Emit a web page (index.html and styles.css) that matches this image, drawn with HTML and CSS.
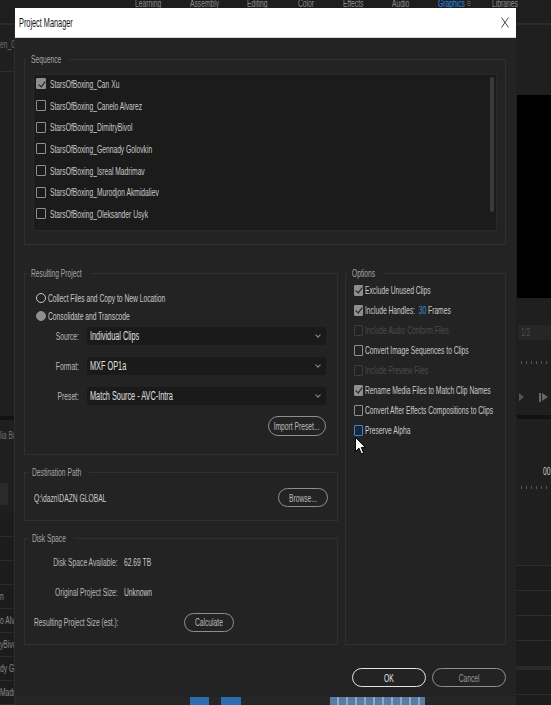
FILE: index.html
```html
<!DOCTYPE html>
<html lang="en">
<head>
    <meta charset="UTF-8">
    <meta name="viewport" content="width=device-width, initial-scale=1.0">
    <title>Project Manager</title>
    <link rel="stylesheet" href="styles.css">
</head>
<body>
    <!-- the editor behind the dialog -->
    <div class="app">
        <header class="workspaces">
            <span class="txt">Learning</span>
            <span class="txt">Assembly</span>
            <span class="txt">Editing</span>
            <span class="txt">Color</span>
            <span class="txt">Effects</span>
            <span class="txt">Audio</span>
            <span class="txt active">Graphics <span class="ws-menu">&#8801;</span></span>
            <span class="txt">Libraries</span>
        </header>

        <div class="panels">
            <aside class="project-panel">
                <div class="panel-head"><span class="txt">en_01</span></div>
                <div class="panel-fill"></div>
                <div class="panel-tab"><span class="txt">lia Browser</span></div>
                <div class="search-box"></div>
                <ul class="bin-rows">
                    <li></li>
                    <li></li>
                    <li></li>
                    <li><span class="txt">n</span></li>
                    <li><span class="txt">o Alvarez</span></li>
                    <li><span class="txt">yBivol</span></li>
                    <li><span class="txt">dy Golovkin</span></li>
                    <li><span class="txt">Madrimav</span></li>
                </ul>
            </aside>

            <main class="editor">
                <div class="clip-row">
                    <span class="clip clip-a"></span>
                    <span class="clip clip-b"></span>
                    <span class="clip clip-c"></span>
                </div>
            </main>

            <aside class="monitor-panel">
                <div class="monitor-video"></div>
                <div class="zoom-box"><span class="txt">1/2</span></div>
                <div class="ruler"></div>
                <div class="transport">
                    <span class="play"></span>
                    <span class="step"></span>
                </div>
                <div class="scrub"></div>
                <div class="timecode"><span class="txt">00:00:00</span></div>
                <div class="ruler"></div>
                <ul class="tracks">
                    <li></li>
                    <li></li>
                    <li></li>
                    <li class="split"></li>
                    <li></li>
                    <li></li>
                </ul>
            </aside>
        </div>
    </div>

    <!-- Project Manager dialog -->
    <div class="dialog">
        <div class="dialog-title">
            <span class="txt">Project Manager</span>
            <svg class="close" width="8" height="11" viewBox="0 0 8 11">
                <path d="M0.5 0.5 L7.5 10.5 M7.5 0.5 L0.5 10.5" stroke="#333" stroke-width="0.9" fill="none"/>
            </svg>
        </div>

        <div class="dialog-body">
            <fieldset class="group sequence">
                <legend><span class="txt">Sequence</span></legend>
                <div class="seq-list">
                    <ul class="seq-items">
                        <li><span class="check on"></span><span class="txt">StarsOfBoxing_Can Xu</span></li>
                        <li><span class="check"></span><span class="txt">StarsOfBoxing_Canelo Alvarez</span></li>
                        <li><span class="check"></span><span class="txt">StarsOfBoxing_DimitryBivol</span></li>
                        <li><span class="check"></span><span class="txt">StarsOfBoxing_Gennady Golovkin</span></li>
                        <li><span class="check"></span><span class="txt">StarsOfBoxing_Isreal Madrimav</span></li>
                        <li><span class="check"></span><span class="txt">StarsOfBoxing_Murodjon Akmidaliev</span></li>
                        <li><span class="check"></span><span class="txt">StarsOfBoxing_Oleksander Usyk</span></li>
                    </ul>
                    <div class="scrollbar"><div class="thumb"></div></div>
                </div>
            </fieldset>

            <div class="dialog-columns">
                <div class="left-col">
                    <fieldset class="group resulting">
                        <legend><span class="txt">Resulting Project</span></legend>
                        <div class="radio-row"><span class="radio"></span><span class="txt">Collect Files and Copy to New Location</span></div>
                        <div class="radio-row"><span class="radio on"></span><span class="txt">Consolidate and Transcode</span></div>
                        <div class="format-grid">
                            <span class="field-label"><span class="txt">Source:</span></span>
                            <div class="select"><span class="txt">Individual Clips</span><span class="chev"></span></div>
                            <span class="field-label"><span class="txt">Format:</span></span>
                            <div class="select"><span class="txt">MXF OP1a</span><span class="chev"></span></div>
                            <span class="field-label"><span class="txt">Preset:</span></span>
                            <div class="select"><span class="txt">Match Source - AVC-Intra</span><span class="chev"></span></div>
                        </div>
                        <div class="row-end">
                            <button class="pill import"><span class="txt">Import Preset...</span></button>
                        </div>
                    </fieldset>

                    <fieldset class="group destination">
                        <legend><span class="txt">Destination Path</span></legend>
                        <div class="path-row">
                            <span class="txt">Q:\dazn\DAZN GLOBAL</span>
                            <button class="pill browse"><span class="txt">Browse...</span></button>
                        </div>
                    </fieldset>

                    <fieldset class="group disk">
                        <legend><span class="txt">Disk Space</span></legend>
                        <div class="disk-grid">
                            <span class="field-label"><span class="txt">Disk Space Available:</span></span>
                            <span class="txt">62.69 TB</span>
                            <span class="field-label"><span class="txt">Original Project Size:</span></span>
                            <span class="txt">Unknown</span>
                        </div>
                        <div class="calc-row">
                            <span class="calc-label"><span class="txt">Resulting Project Size (est.):</span></span>
                            <button class="pill calc"><span class="txt">Calculate</span></button>
                        </div>
                    </fieldset>
                </div>

                <fieldset class="group options">
                    <legend><span class="txt">Options</span></legend>
                    <div class="opt"><span class="check on"></span><span class="txt">Exclude Unused Clips</span></div>
                    <div class="opt"><span class="check on"></span><span class="txt">Include Handles:&nbsp; <span class="num">30</span> Frames</span></div>
                    <div class="opt off"><span class="check"></span><span class="txt">Include Audio Conform Files</span></div>
                    <div class="opt"><span class="check"></span><span class="txt">Convert Image Sequences to Clips</span></div>
                    <div class="opt off"><span class="check"></span><span class="txt">Include Preview Files</span></div>
                    <div class="opt"><span class="check on"></span><span class="txt">Rename Media Files to Match Clip Names</span></div>
                    <div class="opt"><span class="check"></span><span class="txt">Convert After Effects Compositions to Clips</span></div>
                    <div class="opt"><span class="check focus"></span><span class="txt">Preserve Alpha</span></div>
                </fieldset>
            </div>

            <div class="dialog-buttons">
                <button class="pill primary"><span class="txt">OK</span></button>
                <button class="pill"><span class="txt">Cancel</span></button>
            </div>
        </div>

        <svg class="cursor" width="11" height="18" viewBox="0 0 11 18">
            <path d="M0.5 0.5 L0.5 14.5 L4 11.2 L6.4 17 L8.6 16 L6.3 10.4 L10.5 10.4 Z" fill="#fff" stroke="#000" stroke-width="1"/>
        </svg>
    </div>
</body>
</html>
```

FILE: styles.css
```css
* {
    box-sizing: border-box;
}

body {
    margin: 0;
    background-color: #1b1b1b;
    font-family: "Liberation Sans", Arial, sans-serif;
    font-size: 11px;
    color: #cacaca;
}

ul {
    list-style: none;
    margin: 0;
    padding: 0;
}

.txt {
    display: inline-block;
    transform: scaleX(0.61);
    transform-origin: 0 50%;
    white-space: nowrap;
}

/* ---- editor in the background ---- */

.app {
    width: 551px;
    height: 705px;
    display: flex;
    flex-direction: column;
    overflow: hidden;
}

.workspaces {
    height: 25px;
    flex: none;
    display: grid;
    grid-template-columns: 55px 57px 51px 45px 49px 46px 54px auto;
    align-items: start;
    padding-left: 135px;
    background-color: #1e1e1e;
    border-bottom: 2px solid #2b2b2b;
    line-height: 6px;
    color: #8d8d8d;
}

.workspaces .active {
    color: #2d8ceb;
}

.ws-menu {
    color: #6a6a6a;
}

.panels {
    flex: 1;
    display: flex;
    min-height: 0;
}

.project-panel {
    width: 15px;
    flex: none;
    display: flex;
    flex-direction: column;
    background-color: #1f1f1f;
    border-right: 1px solid #2c2c2c;
    overflow: hidden;
    color: #8a8a8a;
}

.panel-head {
    height: 47px;
    flex: none;
    padding-top: 13px;
    border-bottom: 1px solid #2d2d2d;
    color: #707070;
}

.panel-fill {
    flex: 1;
    border-bottom: 4px solid #121212;
}

.panel-tab {
    height: 30px;
    flex: none;
    line-height: 30px;
    color: #777;
}

.search-box {
    height: 22px;
    flex: none;
    width: 8px;
    margin: 33px 0 8px;
    background-color: #2a2a2a;
}

.bin-rows li {
    height: 24px;
    line-height: 23px;
    border-bottom: 1px solid #2a2a2a;
    background-color: #1c1c1c;
}

.editor {
    flex: 1;
    display: flex;
    flex-direction: column;
    justify-content: flex-end;
    background-color: #1d1d1d;
}

.clip-row {
    height: 8px;
    display: flex;
    padding-left: 175px;
    background-color: #262626;
}

.clip-a {
    width: 19px;
    background-color: #2b6db0;
}

.clip-b {
    width: 20px;
    margin-left: 12px;
    background-color: #2b6db0;
}

.clip-c {
    width: 95px;
    margin-left: 89px;
    background: repeating-linear-gradient(90deg, #5c7ba3 0 7px, #8fa9c9 7px 9px);
}

.monitor-panel {
    width: 35px;
    flex: none;
    display: flex;
    flex-direction: column;
    background-color: #1f1f1f;
    overflow: hidden;
}

.monitor-video {
    height: 203px;
    flex: none;
    margin: 70px 0 27px 1px;
    background-color: #000;
}

.zoom-box {
    height: 15px;
    flex: none;
    margin: 0 0 21px 2px;
    padding-left: 3px;
    line-height: 15px;
    background-color: #262626;
    color: #505050;
}

.ruler {
    height: 3px;
    flex: none;
    margin-left: 5px;
    background: repeating-linear-gradient(90deg, #565656 0 1px, transparent 1px 5px);
}

.transport {
    height: 14px;
    flex: none;
    display: flex;
    align-items: center;
    gap: 15px;
    margin: 26px 0 11px 3px;
}

.play {
    width: 0;
    height: 0;
    border-left: 5px solid #555;
    border-top: 4px solid transparent;
    border-bottom: 4px solid transparent;
}

.step {
    width: 9px;
    height: 9px;
    border-left: 2px solid #666;
    position: relative;
}

.step::after {
    content: "";
    position: absolute;
    left: 1px;
    top: 0;
    border-left: 6px solid #666;
    border-top: 4.5px solid transparent;
    border-bottom: 4.5px solid transparent;
}

.scrub {
    height: 4px;
    flex: none;
    margin-left: 1px;
    background-color: #121212;
}

.timecode {
    height: 14px;
    flex: none;
    margin: 45px 0 8px 27px;
    line-height: 14px;
    color: #cfcfcf;
}

.tracks {
    flex: 1;
    margin-top: 76px;
    border-top: 1px solid #2d2d2d;
}

.tracks li {
    height: 25px;
    border-bottom: 1px solid #2d2d2d;
    background-color: #1c1c1c;
}

.tracks li.split {
    height: 29px;
    border-bottom: 4px solid #2a2a2a;
}

/* ---- dialog ---- */

.dialog {
    position: absolute;
    left: 15px;
    top: 8px;
    width: 501px;
    height: 689px;
    display: flex;
    flex-direction: column;
    background-color: #232323;
}

.dialog-title {
    height: 30px;
    flex: none;
    display: flex;
    align-items: center;
    justify-content: space-between;
    padding: 0 7px 0 4px;
    background-color: #fff;
    border-bottom: 1px solid #d4d4d4;
    color: #111;
    font-size: 12px;
}

.dialog-body {
    flex: 1;
    display: flex;
    flex-direction: column;
    padding: 15px 10px 10px 9px;
}

.group {
    margin: 0;
    min-width: 0;
    padding: 9px 8px 13px;
    border: 1px solid #303030;
}

.group legend {
    padding: 0 8px 0 4px;
    margin-left: -6px;
    line-height: 12px;
    color: #a6a6a6;
}

/* legend boxes keep the unsqueezed width, pull the border gap back in */
.sequence legend .txt { margin-right: -1.76em; }
.resulting legend .txt { margin-right: -2.95em; }
.destination legend .txt { margin-right: -2.86em; }
.disk legend .txt { margin-right: -1.97em; }
.options legend .txt { margin-right: -1.34em; }

.check {
    width: 10px;
    height: 11px;
    flex: none;
    position: relative;
    border: 1px solid #8f8f8f;
    border-radius: 1px;
}

.check.on {
    background-color: #8e8e8e;
}

.check.on::after {
    content: "";
    position: absolute;
    left: 2.5px;
    top: 0.5px;
    width: 3px;
    height: 6px;
    border: solid #1c1c1c;
    border-width: 0 1.5px 1.5px 0;
    transform: rotate(38deg);
}

.check.focus {
    border: 1.5px solid #3f82d4;
    background-color: #1d2733;
}

/* sequence list */

.seq-list {
    height: 157px;
    display: flex;
    background-color: #1b1b1b;
    border: 1px solid #292929;
}

.seq-items {
    flex: 1;
    margin-top: -2px;
    padding-left: 2px;
}

.seq-items li {
    height: 21.7px;
    display: flex;
    align-items: center;
    gap: 4px;
}

.scrollbar {
    width: 9px;
    padding: 2px 2px 0 3px;
}

.thumb {
    height: 135px;
    border-radius: 2px;
    background-color: #3a3a3a;
}

/* lower part */

.dialog-columns {
    display: grid;
    grid-template-columns: 314px 161px;
    column-gap: 7px;
    margin-top: 22px;
}

.left-col {
    display: flex;
    flex-direction: column;
    gap: 11px;
}

.resulting {
    padding: 10px 11px 18px 8px;
}

.radio-row {
    height: 18px;
    display: flex;
    align-items: center;
    gap: 2px;
    padding-left: 3px;
}

.radio {
    width: 10px;
    height: 10px;
    flex: none;
    border: 1.5px solid #c9c9c9;
    border-radius: 50%;
}

.radio.on {
    border-color: #8f8f8f;
    background-color: #8f8f8f;
}

.format-grid {
    display: grid;
    grid-template-columns: 46px 1fr;
    column-gap: 8px;
    row-gap: 12px;
    align-items: center;
    margin-top: 2px;
}

.field-label {
    display: flex;
    justify-content: flex-end;
    color: #bababa;
}

.field-label .txt {
    transform-origin: 100% 50%;
}

.select {
    height: 18px;
    display: flex;
    align-items: center;
    justify-content: space-between;
    padding: 0 6px 0 3px;
    background-color: #1a1a1a;
    border-radius: 2px;
    color: #e0e0e0;
    font-size: 12px;
}

.chev {
    width: 4px;
    height: 4px;
    margin-top: -2px;
    border: solid #8a8a8a;
    border-width: 0 1px 1px 0;
    transform: rotate(45deg);
}

.row-end {
    display: flex;
    justify-content: flex-end;
    margin-top: 11px;
}

.pill {
    height: 20px;
    display: flex;
    align-items: center;
    justify-content: center;
    padding: 0;
    background: transparent;
    border: 1px solid #8e8e8e;
    border-radius: 10px;
    color: #bcbcbc;
    font: inherit;
}

.pill .txt {
    transform-origin: 50% 50%;
}

.import {
    width: 58px;
}

.destination {
    padding: 10px 9px 13px;
}

.path-row {
    display: flex;
    align-items: center;
    justify-content: space-between;
}

.browse,
.calc {
    width: 50px;
    height: 19px;
}

.disk {
    padding: 8px 9px 12px;
}

.disk-grid {
    display: grid;
    grid-template-columns: 84px 1fr;
    column-gap: 6px;
    row-gap: 10px;
    grid-auto-rows: 20px;
    align-items: center;
}

.calc-row {
    height: 20px;
    display: flex;
    align-items: center;
    margin-top: 10px;
}

.calc-label {
    width: 150px;
    flex: none;
    color: #bababa;
}

.options {
    padding: 1px 8px 8px;
}

.opt {
    height: 20px;
    display: flex;
    align-items: center;
    gap: 2px;
}

.opt .check {
    width: 9px;
    height: 11px;
}

.opt .check.on::after {
    left: 2px;
}

.opt.off {
    color: #4b4b4b;
}

.opt.off .check {
    border-color: #3c3c3c;
}

.num {
    color: #3d8fe0;
}

.dialog-buttons {
    display: flex;
    justify-content: flex-end;
    gap: 6px;
    margin-top: 23px;
}

.dialog-buttons .pill {
    width: 74px;
    height: 19px;
    color: #9a9a9a;
}

.dialog-buttons .primary {
    border-color: #e4e4e4;
    color: #e6e6e6;
}

.cursor {
    position: absolute;
    left: 340px;
    top: 429px;
}
```
